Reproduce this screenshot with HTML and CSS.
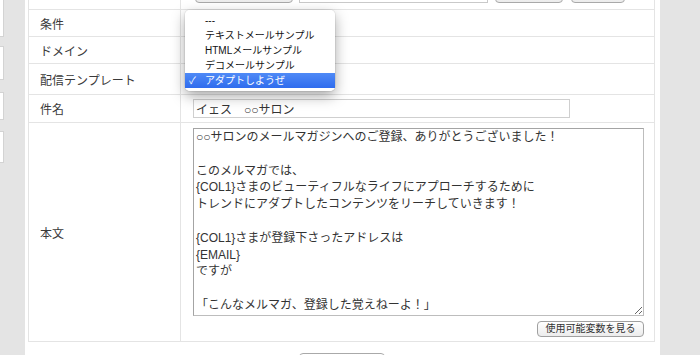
FILE: index.html
```html
<!DOCTYPE html>
<html lang="ja">
<head>
<meta charset="utf-8">
<title>メール配信</title>
<link rel="stylesheet" href="styles.css">
</head>
<body>
<div class="page">
  <aside class="side">
    <div class="sbox s1"></div>
    <div class="sbox s2"></div>
    <div class="sbox s3"></div>
    <div class="sbox s4"></div>
  </aside>
  <main class="panel">
    <table class="form">
      <tr class="r-top">
        <th></th>
        <td>
          <div class="tools">
            <button class="btn b1" type="button"></button>
            <input class="field f1" type="text">
            <button class="btn b2" type="button"></button>
            <button class="btn b3" type="button"></button>
          </div>
        </td>
      </tr>
      <tr class="r-cond"><th>条件</th><td></td></tr>
      <tr class="r-domain"><th>ドメイン</th><td></td></tr>
      <tr class="r-tpl"><th>配信テンプレート</th><td></td></tr>
      <tr class="r-subj"><th>件名</th><td><input class="field subject" type="text" value="イェス　○○サロン"></td></tr>
      <tr class="r-body">
        <th>本文</th>
        <td>
          <textarea class="body-text">○○サロンのメールマガジンへのご登録、ありがとうございました！

このメルマガでは、
{COL1}さまのビューティフルなライフにアプローチするために
トレンドにアダプトしたコンテンツをリーチしていきます！

{COL1}さまが登録下さったアドレスは
{EMAIL}
ですが

「こんなメルマガ、登録した覚えねーよ！」</textarea>
          <div class="vars"><button class="btn small" type="button">使用可能変数を見る</button></div>
        </td>
      </tr>
    </table>
    <div class="footer"><button class="btn submit" type="button"></button></div>

    <div class="menu">
      <div class="item"><span class="check"></span>---</div>
      <div class="item"><span class="check"></span>テキストメールサンプル</div>
      <div class="item"><span class="check"></span>HTMLメールサンプル</div>
      <div class="item"><span class="check"></span>デコメールサンプル</div>
      <div class="item selected"><span class="check">✓</span>アダプトしようぜ</div>
    </div>
  </main>
  <div class="rest"></div>
</div>
</body>
</html>
```

FILE: styles.css
```css
* { box-sizing: border-box; }

html, body {
  margin: 0;
  padding: 0;
}

body {
  background: #e4e4e4;
  font-family: "Liberation Sans", "Noto Sans CJK JP", sans-serif;
  overflow: hidden;
  height: 355px;
}

.page {
  display: flex;
  height: 355px;
}

.side {
  width: 25px;
  flex: none;
  display: flex;
  flex-direction: column;
}

.sbox {
  width: 10px;
  margin-left: -6px;
  background: #fff;
  border: 1px solid #d3d3d3;
}
.s1 { height: 38px; margin-top: -1px; }
.s2 { height: 34px; margin-top: 9px; }
.s3 { height: 28px; margin-top: 12px; }
.s4 { height: 32px; margin-top: 11px; }

.panel {
  position: relative;
  width: 635px;
  flex: none;
  background: #fff;
  padding: 0 5px 0 3px;
}

.rest { flex: 1; }

.form {
  border-collapse: collapse;
  width: 627px;
  margin-top: -20px;
  font-size: 12px;
  color: #3a3a3a;
  table-layout: fixed;
}

.form th,
.form td {
  border: 1px solid #e4e4e4;
  padding: 0;
}

.form th {
  width: 152px;
  text-align: left;
  font-weight: normal;
  padding-left: 11px;
  vertical-align: middle;
}

.form td {
  padding-left: 12px;
  vertical-align: middle;
}

.r-top th, .r-top td { height: 29px; vertical-align: bottom; }
.r-cond th, .r-cond td { height: 27px; }
.r-domain th, .r-domain td { height: 27px; }
.r-tpl th, .r-tpl td { height: 31px; }
.r-subj th, .r-subj td { height: 28px; }

.tools {
  display: flex;
  align-items: flex-end;
  padding: 0 0 6px 2px;
}

.btn {
  font-family: "Liberation Sans", "Noto Sans CJK JP", sans-serif;
  border: 1px solid #a9a9a9;
  border-radius: 4px;
  background: linear-gradient(#ffffff, #ececec);
  color: #333;
  padding: 0;
}

.b1 { width: 98px; height: 20px; }
.b2 { width: 68px; height: 20px; margin-left: 7px; }
.b3 { width: 54px; height: 20px; margin-left: 8px; }

.field {
  font-family: "Liberation Sans", "Noto Sans CJK JP", sans-serif;
  border: 1px solid #c9c9c9;
  background: #fff;
  outline: none;
}

.f1 { width: 189px; height: 20px; margin-left: 6px; }

.subject {
  display: block;
  width: 377px;
  height: 19px;
  font-size: 12px;
  color: #333;
  padding: 0 2px;
  border-color: #cfcfcf;
}

.r-body td {
  padding: 5px 10px 4px 12px;
}

.body-text {
  display: block;
  width: 451px;
  height: 188px;
  margin: 0;
  padding: 0 2px;
  font-family: "Liberation Sans", "Noto Sans CJK JP", sans-serif;
  font-size: 12px;
  line-height: 16.8px;
  color: #333;
  border: 1px solid #a4a4a4;
  border-right-color: #bdbdbd;
  border-bottom-color: #bdbdbd;
  overflow: hidden;
  resize: both;
  outline: none;
}

.vars {
  display: flex;
  justify-content: flex-end;
  margin-top: 5px;
}

.small {
  width: 107px;
  height: 16px;
  font-size: 10px;
  line-height: 14px;
  color: #333;
  border-color: #a0a0a0;
}

.footer {
  display: flex;
  justify-content: center;
  padding-top: 11px;
}

.submit {
  width: 86px;
  height: 22px;
}

.menu {
  position: absolute;
  left: 160px;
  top: 10px;
  width: 150px;
  padding: 3px 0;
  background: rgba(255, 255, 255, 0.97);
  border-radius: 5px;
  box-shadow: 0 5px 14px rgba(0, 0, 0, 0.35), 0 0 0 1px rgba(0, 0, 0, 0.06);
  font-size: 10px;
  color: #111;
}

.item {
  height: 15px;
  line-height: 15px;
  white-space: nowrap;
}

.check {
  display: inline-block;
  width: 20px;
  padding-left: 4px;
  font-size: 10px;
}

.item.selected {
  background: linear-gradient(#4f8af6, #2f6cee);
  color: #fff;
}
```
